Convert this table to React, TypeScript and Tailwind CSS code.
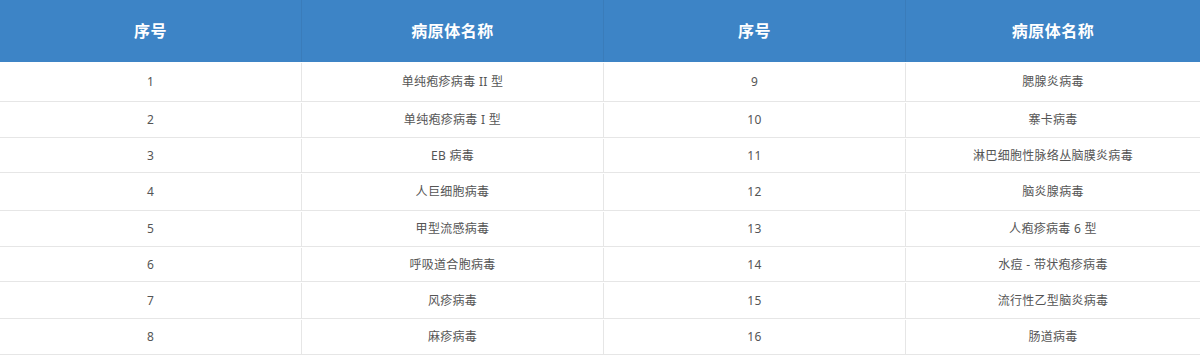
const rows: { h: string; a: string; b: string; c: string; d: string }[] = [
  { h: 'h-[40px]', a: '1', b: '单纯疱疹病毒 II 型', c: '9', d: '腮腺炎病毒' },
  { h: 'h-[36px]', a: '2', b: '单纯疱疹病毒 I 型', c: '10', d: '寨卡病毒' },
  { h: 'h-[35px]', a: '3', b: 'EB 病毒', c: '11', d: '淋巴细胞性脉络丛脑膜炎病毒' },
  { h: 'h-[38px]', a: '4', b: '人巨细胞病毒', c: '12', d: '脑炎腺病毒' },
  { h: 'h-[36px]', a: '5', b: '甲型流感病毒', c: '13', d: '人疱疹病毒 6 型' },
  { h: 'h-[35px]', a: '6', b: '呼吸道合胞病毒', c: '14', d: '水痘 - 带状疱疹病毒' },
  { h: 'h-[37px]', a: '7', b: '风疹病毒', c: '15', d: '流行性乙型脑炎病毒' },
  { h: 'h-[36px]', a: '8', b: '麻疹病毒', c: '16', d: '肠道病毒' },
]

const font = "font-['Noto_Sans','Noto_Sans_CJK_SC',sans-serif]"

export default function App() {
  return (
    <div className={`w-[1200px] h-[356px] bg-white ${font}`}>
      <div className="grid grid-cols-[302px_302px_302px_1fr] h-[62px] bg-[#3d84c6] text-white text-[16px] font-bold tracking-[0.5px]">
        <div className="flex items-center justify-center border-r border-[#3a7cba]">序号</div>
        <div className="flex items-center justify-center border-r border-[#3a7cba]">病原体名称</div>
        <div className="flex items-center justify-center border-r border-[#3a7cba]">序号</div>
        <div className="flex items-center justify-center">病原体名称</div>
      </div>
      {rows.map((r) => (
        <div
          key={r.a}
          className={`grid grid-cols-[302px_302px_302px_1fr] ${r.h} border-b border-[#e6e6e6] text-[12px] text-[#555] tracking-[0.3px] pt-px`}
        >
          <div className="flex items-center justify-center border-r border-[#e6e6e6]">{r.a}</div>
          <div className="flex items-center justify-center border-r border-[#e6e6e6]">{r.b}</div>
          <div className="flex items-center justify-center border-r border-[#e6e6e6]">{r.c}</div>
          <div className="flex items-center justify-center">{r.d}</div>
        </div>
      ))}
    </div>
  )
}
